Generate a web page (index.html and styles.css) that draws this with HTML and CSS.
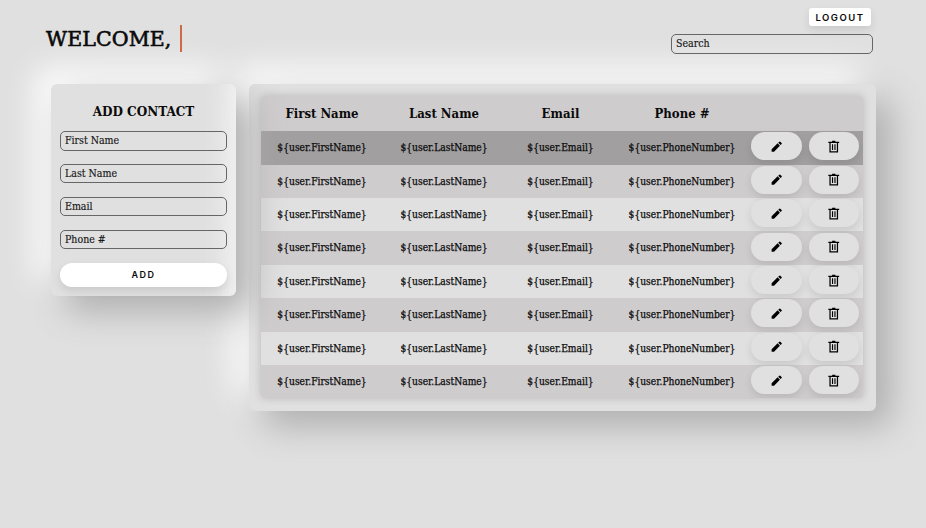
FILE: index.html
```html
<!DOCTYPE html>
<html lang="en">
<head>
<meta charset="utf-8">
<title>Contacts</title>
<link rel="stylesheet" href="styles.css">
</head>
<body>
<svg class="sprite" aria-hidden="true">
  <symbol id="pencil" viewBox="0 0 24 24"><path d="M2.500 17V21.500H7L17.810 10.400l-4.200-4.200L2.500 17zM21 7.200a1.200 1.200 0 0 0 0-1.700l-2.500-2.500a1.200 1.200 0 0 0-1.700 0l-2.100 2.100 4.200 4.200z"/></symbol>
  <symbol id="trash" viewBox="0 0 24 24"><path fill-rule="evenodd" d="M15 3h7v2.400h-2V23H4V5.400H2V3h7V1.500h6zM6.300 5.400v15.300h11.400V5.400zM8.700 8h2.100v10.500H8.700zM13.200 8h2.100v10.500h-2.100z"/></symbol>
</svg>
<header class="topbar">
  <h1 class="welcome">WELCOME,</h1>
  <div class="tools">
    <button class="logout">LOGOUT</button>
    <input class="field search" type="text" placeholder="Search">
  </div>
</header>
<main class="layout">
  <form class="panel add-form">
    <h2 class="form-title">ADD CONTACT</h2>
    <input class="field" type="text" placeholder="First Name">
    <input class="field" type="text" placeholder="Last Name">
    <input class="field" type="text" placeholder="Email">
    <input class="field" type="text" placeholder="Phone #">
    <button class="add" type="button">ADD</button>
  </form>
  <section class="panel list">
    <div class="table" id="table">
      <div class="row head"><span>First Name</span><span>Last Name</span><span>Email</span><span>Phone #</span></div>
    </div>
  </section>
</main>
<script src="app.js"></script>
</body>
</html>
```
FILE: app.js
```js
const fields = ['FirstName', 'LastName', 'Email', 'PhoneNumber'];
const table = document.getElementById('table');
const cells = fields.map(name => '<span>${user.' + name + '}</span>').join('');
const actions = ['pencil', 'trash']
  .map(icon => `<button class="action" aria-label="${icon}"><svg><use href="#${icon}"/></svg></button>`)
  .join('');

for (let i = 0; i < 8; i++) {
  table.insertAdjacentHTML('beforeend', `<div class="row item">${cells}${actions}</div>`);
}
```
FILE: styles.css
```css
* { box-sizing: border-box; }
body { margin: 0; min-height: 528px; overflow: hidden; background: #e0e0e0; color: #0a0a0a; font-family: "DejaVu Serif Condensed", "DejaVu Serif", serif; font-stretch: condensed; }
button, input { font: inherit; color: inherit; }
.sprite { display: none; }

.topbar { position: relative; z-index: 2; height: 84px; padding: 8px 53px 0 46px; display: flex; justify-content: space-between; align-items: flex-start; }
.welcome { margin: 17px 0 0; height: 27px; width: 136px; border-right: 2px solid #d0694a; font-family: "DejaVu Serif", serif; font-stretch: normal; font-size: 20.5px; line-height: 28px; font-weight: 400; letter-spacing: .1px; white-space: nowrap; -webkit-text-stroke: .6px; }
.tools { width: 202px; display: flex; flex-direction: column; align-items: flex-end; }
.logout { width: 62px; height: 18px; margin: 0 2px 8px 0; padding: 0; border: 0; border-radius: 3px; background: #fff; font: 600 9.5px/19px Inter, sans-serif; letter-spacing: 1.5px; box-shadow: 0 4px 8px rgba(0,0,0,.1); }

.field { display: block; width: 100%; height: 20px; padding: 0 4px 1px; border: 1px solid #666; border-radius: 5px; background: transparent; font-size: 10.5px; outline: 0; -webkit-text-stroke: .15px; }
.search { padding-bottom: 2px; }
.field::placeholder { color: #151515; opacity: 1; }

.layout { display: flex; align-items: flex-start; gap: 12.5px; padding-left: 51px; }
.panel { border-radius: 6px; box-shadow: 15px 15px 35px #aeaeae, -15px -15px 32px #fff; }
.add-form { position: relative; z-index: 1; width: 185px; height: 212px; padding: 19px 9px 0; }
.form-title { margin: 0 0 12px; font-size: 13.4px; line-height: 16px; height: 16px; text-align: center; white-space: nowrap; }
.add-form .field { height: 19.5px; margin-bottom: 13.4px; }
.add { display: block; width: 167px; height: 24px; padding: 0; border: 0; border-radius: 12px; background: #fff; font: 600 9px/24px Inter, sans-serif; letter-spacing: 1.5px; box-shadow: 0 4px 8px rgba(0,0,0,.1); }

.list { width: 627px; height: 327px; padding: 12px 12.5px 12px 12px; }
.table { border-radius: 4px; box-shadow: 0 0 8px rgba(0,0,0,.18); overflow: hidden; }
.row { display: grid; grid-template-columns: 122px 122px 111px 132px 57px 58px; height: 33.4px; align-items: center; text-align: center; font-size: 10.2px; white-space: nowrap; background: rgba(189,184,187,.5); -webkit-text-stroke: .25px; }
.row span { margin: -.4px 0 0 1px; }
.head { height: 35.3px; font-size: 13px; font-weight: 700; -webkit-text-stroke: 0; }
.item:nth-child(2) { background: rgba(98,94,96,.5); }
.item:nth-child(2n+4) { background: transparent; }
.item:nth-child(2n+3) { background: rgba(189,184,187,.5); }
.action { position: relative; left: .7px; width: 50.5px; height: 28px; margin: -3px auto 0; padding: 0; border: 0; border-radius: 14px; background: #e0e0e0; display: grid; place-items: center; box-shadow: 0 4px 8px rgba(0,0,0,.1); }
.action svg { width: 13.5px; height: 13px; }
```
